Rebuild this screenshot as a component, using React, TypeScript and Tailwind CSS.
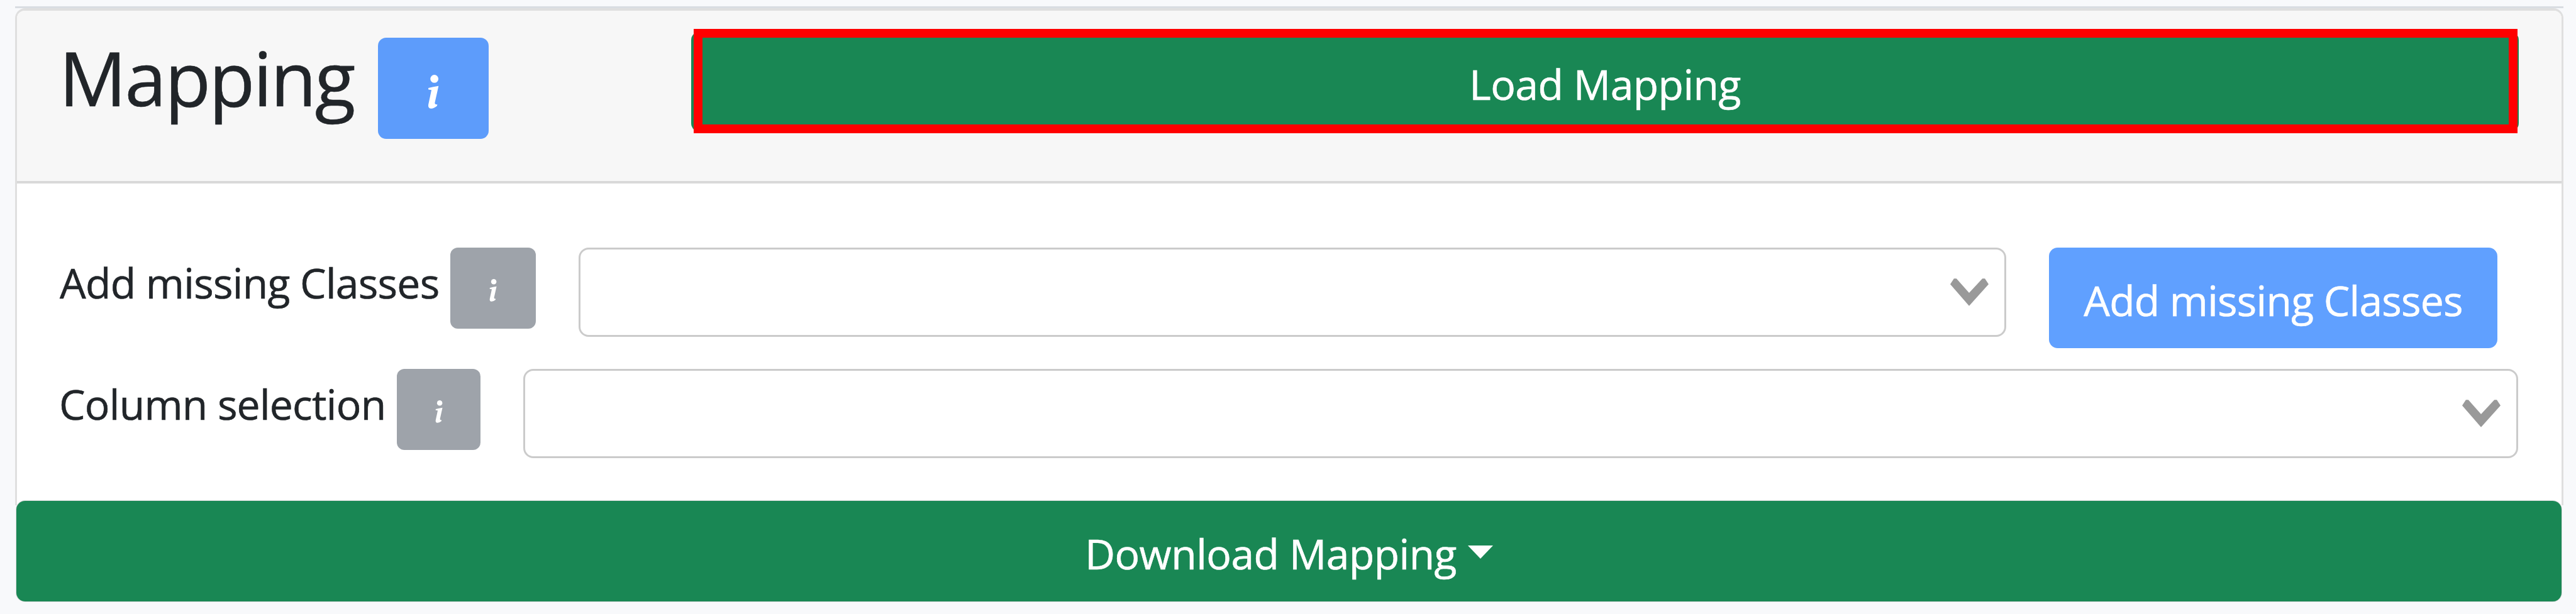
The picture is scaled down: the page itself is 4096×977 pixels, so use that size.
import React from "react";

function InfoGlyph({ className }: { className: string }) {
  return (
    <svg viewBox="0 0 18 55" className={className} fill="#fff">
      <circle cx="10.700" cy="6.600" r="6.500" />
      <path d="M1 21.500 L9 19.500 L17.500 18 L11.500 45 Q11 48.500 15.500 48 L15 50.500 Q10 55 5 54.700 Q0 54 1 48 L6 24.800 L1 24 Z" />
    </svg>
  );
}

function InfoButton({ className }: { className: string }) {
  return (
    <button
      className={"flex h-[129px] shrink-0 items-center justify-center rounded-[12px] bg-[#9ea3aa] pt-[7px] " + className}
    >
      <InfoGlyph className="h-[36px] w-[14px]" />
    </button>
  );
}

function Select({ className }: { className: string }) {
  return (
    <div
      className={
        "flex h-[142px] shrink-0 items-center justify-end rounded-[16px] border-[3px] border-[#cbcbcb] bg-white pr-[25px] " +
        className
      }
    >
      <svg viewBox="0 0 62 44" className="h-[44px] w-[61px]" fill="#999">
        <path d="M0 9 L6 0 H10 L30.500 23 L52 0 H56 L62 9 L30.500 44 Z" />
      </svg>
    </div>
  );
}

export default function App() {
  return (
    <div className="h-[977px] w-[4096px] overflow-hidden bg-[#f8f9fb] pl-[24px] pt-[10px] font-['Open_Sans',sans-serif] text-[#212529] [-webkit-text-stroke:0.6px_currentColor]">
      <div className="h-[3px] w-[4052px] bg-[#d9dde2]" />
      <main className="h-[791px] w-[4052px] rounded-t-[16px] border-x-[3px] border-t-4 border-[#dfdfdf] bg-white">
        <header className="flex h-[275px] items-start rounded-t-[12px] border-b-4 border-[#d9d9d9] bg-[#f7f7f7]">
          <h1 className="ml-[67px] w-[507px] shrink-0 whitespace-nowrap text-[119px] leading-[213px] tracking-[-2.500px]">
            Mapping
          </h1>
          <button className="mt-[43px] flex h-[161px] w-[176px] shrink-0 items-center justify-center rounded-[13px] bg-[#5d9cfb] pt-[11px]">
            <InfoGlyph className="h-[54px] w-[18px]" />
          </button>
          <button className="relative ml-[322px] mt-[33px] h-[160px] w-[2906px] shrink-0 rounded-[14px] bg-[#198754] pt-[6px] text-[66px] tracking-[-0.550px] text-white">
            Load Mapping
            <span className="absolute -top-[4px] left-[4px] right-[2px] h-[166px] border-[14px] border-[#ff0000]" />
          </button>
        </header>
        <section className="pt-[102px] text-[66px] leading-[110px]">
          <div className="flex h-[193px] items-start">
            <span className="ml-[68px] w-[621px] shrink-0 whitespace-nowrap tracking-[-0.700px]">
              Add missing Classes
            </span>
            <InfoButton className="w-[136px]" />
            <Select className="ml-[68px] w-[2270px]" />
            <button className="ml-[68px] h-[160px] w-[713px] shrink-0 rounded-[14px] bg-[#60a0ff] pt-[6px] tracking-[-0.740px] text-white">
              Add missing Classes
            </button>
          </div>
          <div className="flex items-start">
            <span className="ml-[67px] w-[537px] shrink-0 whitespace-nowrap tracking-[-0.750px]">
              Column selection
            </span>
            <InfoButton className="w-[133px]" />
            <Select className="ml-[68px] w-[3172px]" />
          </div>
        </section>
      </main>
      <button className="relative -mt-[7px] ml-[2px] flex h-[160px] w-[4047px] items-center justify-center gap-[18px] rounded-[14px] bg-[#198754] pt-[6px] text-[66px] tracking-[-0.550px] text-white shadow-[0_0_0_1px_#dcdcdc]">
        Download Mapping
        <svg viewBox="0 0 40 21" className="-mt-[3px] h-[21px] w-[40px]" fill="#fff">
          <path d="M0 0 H40 L20 21 Z" />
        </svg>
      </button>
    </div>
  );
}
